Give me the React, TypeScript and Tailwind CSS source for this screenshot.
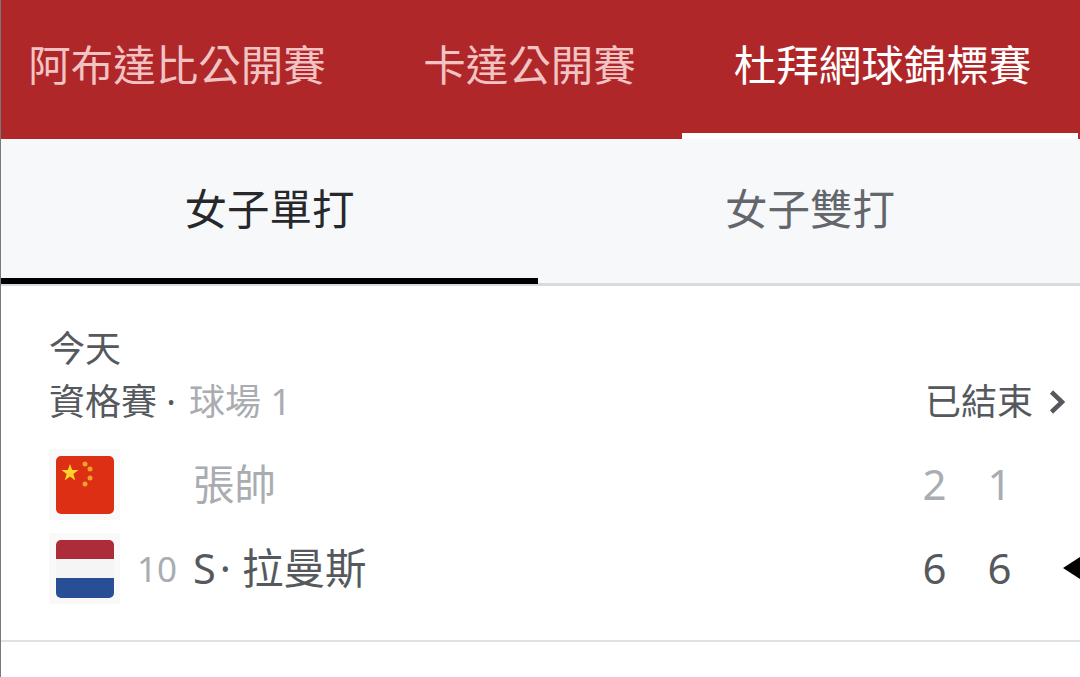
const FONT = "font-['Noto_Sans','Noto_Sans_CJK_TC',sans-serif]";

function ChinaFlag() {
  return (
    <svg viewBox="0 0 58 58" className="size-[58px]">
      <rect width="58" height="58" rx="5" fill="#dc2f14" />
      <polygon
        points="14,8 16.2,14 22.5,14 17.4,18 19.3,24.5 14,20.6 8.7,24.5 10.6,18 5.5,14 11.8,14"
        fill="#fbd42a"
      />
      <circle cx="29" cy="8" r="2.5" fill="#f0a12c" />
      <circle cx="34" cy="13" r="2.5" fill="#f0a12c" />
      <circle cx="34" cy="22" r="2.5" fill="#f0a12c" />
      <circle cx="29" cy="28" r="2.5" fill="#f0a12c" />
    </svg>
  );
}

function NetherlandsFlag() {
  return (
    <div className="flex h-[58px] w-[58px] flex-col overflow-hidden rounded-[5px]">
      <div className="h-[19px] bg-[#ac2c3a]" />
      <div className="h-[19px] bg-[#f5f5f6]" />
      <div className="h-[20px] bg-[#284f96]" />
    </div>
  );
}

type PlayerRowProps = {
  flag: React.ReactNode;
  seed?: string;
  name: React.ReactNode;
  scores: string[];
  winner?: boolean;
};

function PlayerRow({ flag, seed, name, scores, winner }: PlayerRowProps) {
  const color = winner ? 'text-[#55595e]' : 'text-[#a9acb0]';
  return (
    <div className="relative flex h-[71px] items-center">
      <div className="flex h-[71px] w-[71px] shrink-0 items-center justify-center bg-[#f9f9fa]">
        {flag}
      </div>
      <span className="w-[57px] text-right text-[35px] leading-none text-[#a9acb0]">{seed}</span>
      <span className={`ml-[16px] flex-1 text-[41.5px] leading-none whitespace-nowrap ${color}`}>
        {name}
      </span>
      <div className={`mr-[62px] mb-[2px] flex gap-[28px] text-[42px] leading-none ${color}`}>
        {scores.map((score, i) => (
          <span key={i} className="w-[37px] text-center">
            {score}
          </span>
        ))}
      </div>
      {winner && (
        <div className="absolute top-[24px] right-0 h-0 w-0 border-y-[11px] border-r-[17px] border-y-transparent border-r-black" />
      )}
    </div>
  );
}

export default function App() {
  return (
    <div
      className={`h-[677px] w-[1080px] overflow-hidden border-l border-l-[#77797c] bg-white ${FONT}`}
    >
      <div className="relative flex h-[139px] bg-[#b0272a] pt-[35px] text-[42.5px] leading-[60px] whitespace-nowrap">
        <div className="w-[352px] text-center text-[#f2c3c3]">阿布達比公開賽</div>
        <div className="w-[353px] text-center text-[#f2c3c3]">卡達公開賽</div>
        <div className="w-[353px] text-center text-white">杜拜網球錦標賽</div>
        <div className="absolute bottom-0 left-[681px] h-[6px] w-[396px] bg-white" />
      </div>

      <div className="flex h-[147px] border-b-[3px] border-b-[#d8dadd] bg-[#f7f8fa] text-[42.5px] leading-[60px]">
        <div className="relative w-[537px] pt-[40px] text-center text-[#26282b]">
          女子單打
          <div className="absolute right-0 -bottom-[1px] left-0 h-[6px] bg-black" />
        </div>
        <div className="flex-1 pt-[40px] pl-[2px] text-center text-[#63666a]">女子雙打</div>
      </div>

      <div className="h-[356px] border-b-2 border-b-[#e0e1e3] pt-[40px] pl-[48px]">
        <div className="text-[36px] leading-[46px] text-[#55595e]">今天</div>
        <div className="mt-[7px] flex h-[46px] items-center text-[36px] leading-[46px]">
          <span className="text-[#55595e]">資格賽 ·</span>
          <span className="ml-[13px] text-[#a9acb0]">球場 1</span>
          <span className="ml-auto text-[#55595e]">已結束</span>
          <svg viewBox="0 0 16 24" className="mr-[15px] ml-[16px] h-[24px] w-[16px]">
            <path d="M2.5 2l10.5 10-10.5 10" fill="none" stroke="#55595e" strokeWidth="4.5" />
          </svg>
        </div>
        <div className="mt-[24px] flex flex-col gap-[13px]">
          <PlayerRow flag={<ChinaFlag />} name="張帥" scores={['2', '1']} />
          <PlayerRow
            flag={<NetherlandsFlag />}
            seed="10"
            name={
              <>
                <span className="mr-[4px]">S</span>
                <span className="mr-[11px]">·</span>拉曼斯
              </>
            }
            scores={['6', '6']}
            winner
          />
        </div>
      </div>
    </div>
  );
}
